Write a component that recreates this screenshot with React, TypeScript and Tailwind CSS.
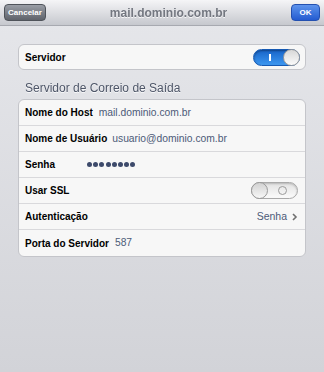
import React from "react";

function Toggle({ on }: { on: boolean }) {
  if (on) {
    return (
      <div className="relative w-[47px] h-[17px] rounded-full bg-gradient-to-b from-[#1864c9] to-[#3d97f0] border border-[#1559b3] shadow-[inset_0_1px_2px_rgba(0,0,0,0.35)] flex items-center">
        <span className="ml-[15px] w-[1.5px] h-[7px] bg-white" />
        <span className="absolute right-[-1px] top-[-1px] w-[17px] h-[17px] rounded-full bg-gradient-to-b from-[#d8d8d8] to-[#fbfbfb] border border-[#9a9a9a]" />
      </div>
    );
  }
  return (
    <div className="relative w-[47px] h-[17px] rounded-full bg-gradient-to-b from-[#e2e2e2] to-[#fbfbfb] border border-[#a9a9a9] shadow-[inset_0_1px_2px_rgba(0,0,0,0.2)] flex items-center justify-end">
      <span className="mr-[10px] w-[9px] h-[9px] rounded-full border-[1.5px] border-[#9b9b9b]" />
      <span className="absolute left-[-1px] top-[-1px] w-[17px] h-[17px] rounded-full bg-gradient-to-b from-[#d2d2d2] to-[#f7f7f7] border border-[#9a9a9a]" />
    </div>
  );
}

function Row({
  label,
  children,
  last,
}: {
  label: string;
  children?: React.ReactNode;
  last?: boolean;
}) {
  return (
    <div
      className={
        "h-[26px] flex items-center pl-[6px] pr-[7px] " +
        (last ? "" : "border-b border-[#d9d9dc]")
      }
    >
      <span className="font-bold text-[10px] text-black shrink-0">{label}</span>
      {children}
    </div>
  );
}

export default function App() {
  return (
    <div
      className="w-[324px] h-[372px] flex flex-col bg-gradient-to-b from-[#e6e7eb] to-[#d2d3d8] overflow-hidden"
      style={{ fontFamily: '"Liberation Sans", Arial, sans-serif' }}
    >
      {/* Top bar */}
      <div className="h-[26px] shrink-0 flex items-center justify-between px-[4px] bg-gradient-to-b from-[#f5f5f7] to-[#c6c8ce] border-b border-[#a7a9b0]">
        <button className="h-[17px] w-[42px] rounded-[4px] bg-gradient-to-b from-[#9a9ea6] to-[#5f636b] border border-[#4f535a] text-white text-[8px] font-bold leading-none">
          Cancelar
        </button>
        <span className="text-[12px] font-bold text-[#737780] drop-shadow-[0_1px_0_rgba(255,255,255,0.8)]">
          mail.dominio.com.br
        </span>
        <button className="h-[17px] w-[29px] rounded-[4px] bg-gradient-to-b from-[#5d93ec] to-[#245bd0] border border-[#2350b0] text-white text-[8px] font-bold leading-none">
          OK
        </button>
      </div>

      <div className="px-[18px] pt-[18px]">
        {/* Servidor */}
        <div className="h-[26px] rounded-[6px] bg-[#f7f7f7] border border-[#c4c5ca] flex items-center justify-between pl-[6px] pr-[5px]">
          <span className="font-bold text-[10px] text-black">Servidor</span>
          <Toggle on />
        </div>

        <div className="pl-[7px] pt-[10px] pb-[3px] text-[12px] leading-[16px] text-[#4e5668] drop-shadow-[0_1px_0_rgba(255,255,255,0.8)]">
          Servidor de Correio de Saída
        </div>

        <div className="rounded-[6px] bg-[#f7f7f7] border border-[#c4c5ca]">
          <Row label="Nome do Host">
            <span className="ml-[6px] text-[10.3px] text-[#4c5a78]">mail.dominio.com.br</span>
          </Row>
          <Row label="Nome de Usuário">
            <span className="ml-[5px] text-[10.3px] text-[#4c5a78]">usuario@dominio.com.br</span>
          </Row>
          <Row label="Senha">
            <span className="ml-[32px] flex gap-[1.2px]">
              {[0, 1, 2, 3, 4, 5, 6, 7].map((i) => (
                <span key={i} className="w-[5px] h-[5px] rounded-full bg-[#3d4a6b]" />
              ))}
            </span>
          </Row>
          <Row label="Usar SSL">
            <span className="ml-auto">
              <Toggle on={false} />
            </span>
          </Row>
          <Row label="Autenticação">
            <span className="ml-auto text-[10.5px] text-[#4c5a78]">Senha</span>
            <svg className="ml-[5px] w-[6px] h-[8px]" viewBox="0 0 6 8">
              <path d="M1 1l3 3-3 3" fill="none" stroke="#707070" strokeWidth={1.6} />
            </svg>
          </Row>
          <Row label="Porta do Servidor" last>
            <span className="ml-[6px] text-[10.3px] text-[#4c5a78]">587</span>
          </Row>
        </div>
      </div>
    </div>
  );
}
